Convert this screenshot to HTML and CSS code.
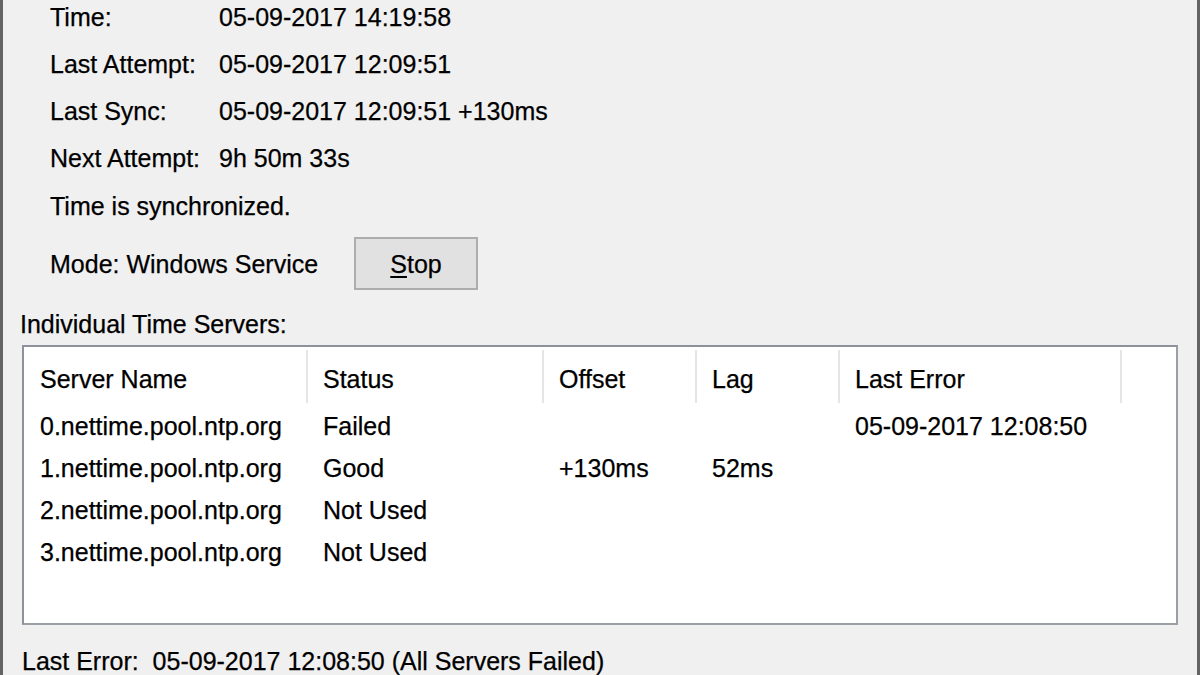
FILE: index.html
```html
<!DOCTYPE html>
<html>
<head>
<meta charset="utf-8">
<link rel="stylesheet" href="styles.css">
</head>
<body>
<div class="window">
  <div class="info">
    <span class="label">Time:</span><span class="value">05-09-2017 14:19:58</span>
    <span class="label">Last Attempt:</span><span class="value">05-09-2017 12:09:51</span>
    <span class="label">Last Sync:</span><span class="value">05-09-2017 12:09:51 +130ms</span>
    <span class="label">Next Attempt:</span><span class="value">9h 50m 33s</span>
  </div>
  <div class="status">Time is synchronized.</div>
  <div class="mode">
    <span class="mode-label">Mode: Windows Service</span>
    <button class="btn"><u>S</u>top</button>
  </div>
  <div class="section">Individual Time Servers:</div>
  <div class="listbox">
    <div class="grid">
      <div class="hd">Server Name</div>
      <div class="hd">Status</div>
      <div class="hd">Offset</div>
      <div class="hd">Lag</div>
      <div class="hd">Last Error</div>
      <div class="hd last"></div>

      <div class="cell">0.nettime.pool.ntp.org</div>
      <div class="cell">Failed</div>
      <div class="cell"></div>
      <div class="cell"></div>
      <div class="cell">05-09-2017 12:08:50</div>
      <div class="cell"></div>

      <div class="cell">1.nettime.pool.ntp.org</div>
      <div class="cell">Good</div>
      <div class="cell">+130ms</div>
      <div class="cell">52ms</div>
      <div class="cell"></div>
      <div class="cell"></div>

      <div class="cell">2.nettime.pool.ntp.org</div>
      <div class="cell">Not Used</div>
      <div class="cell"></div>
      <div class="cell"></div>
      <div class="cell"></div>
      <div class="cell"></div>

      <div class="cell">3.nettime.pool.ntp.org</div>
      <div class="cell">Not Used</div>
      <div class="cell"></div>
      <div class="cell"></div>
      <div class="cell"></div>
      <div class="cell"></div>
    </div>
  </div>
  <div class="footer">Last Error:&nbsp; 05-09-2017 12:08:50 (All Servers Failed)</div>
</div>
</body>
</html>
```
FILE: styles.css
```css
html, body {
  margin: 0;
  padding: 0;
}
body {
  background: #f0f0f0;
  font-family: "Liberation Sans", Arial, sans-serif;
  font-size: 25px;
  color: #000;
  line-height: 28px;
  -webkit-text-stroke: 0.25px #000;
}
.window {
  box-sizing: border-box;
  width: 1200px;
  height: 675px;
  border-left: 3px solid #646464;
  border-right: 3px solid #646464;
  overflow: hidden;
}
.info {
  display: grid;
  grid-template-columns: 169px auto;
  row-gap: 19px;
  padding: 3px 0 0 47px;
}
.label, .value {
  white-space: nowrap;
}
.status {
  padding-left: 47px;
  margin-top: 20px;
}
.mode {
  display: flex;
  align-items: center;
  margin-top: 17px;
  padding-left: 47px;
}
.mode-label {
  width: 304px;
  white-space: nowrap;
}
.btn {
  box-sizing: border-box;
  width: 124px;
  height: 53px;
  background: #e1e1e1;
  border: 2px solid #adadad;
  font: inherit;
  color: #000;
  padding: 0;
  margin: 0;
}
.btn u {
  text-decoration-thickness: 2px;
  text-underline-offset: 3px;
}
.section {
  margin-top: 20px;
  padding-left: 17px;
}
.listbox {
  box-sizing: border-box;
  margin: 7px 0 0 19px;
  width: 1156px;
  height: 280px;
  background: #fff;
  border: 2px solid #8d9199;
  border-right-color: #9a9ea5;
  border-bottom-color: #9a9ea5;
}
.grid {
  display: grid;
  grid-template-columns: 284px 236px 153px 143px 282px 1fr;
  grid-template-rows: 58px repeat(4, 42px);
}
.hd {
  margin-top: 3px;
  height: 53px;
  border-right: 2px solid #e5e5e5;
  padding: 15px 0 0 15px;
  box-sizing: border-box;
  white-space: nowrap;
}
.hd:first-child {
  padding-left: 16px;
}
.hd.last {
  border-right: none;
}
.cell {
  padding: 7px 0 0 15px;
  white-space: nowrap;
}
.cell:nth-child(6n+1) {
  padding-left: 16px;
}
.footer {
  margin-top: 22px;
  padding-left: 19px;
  white-space: nowrap;
}
```
